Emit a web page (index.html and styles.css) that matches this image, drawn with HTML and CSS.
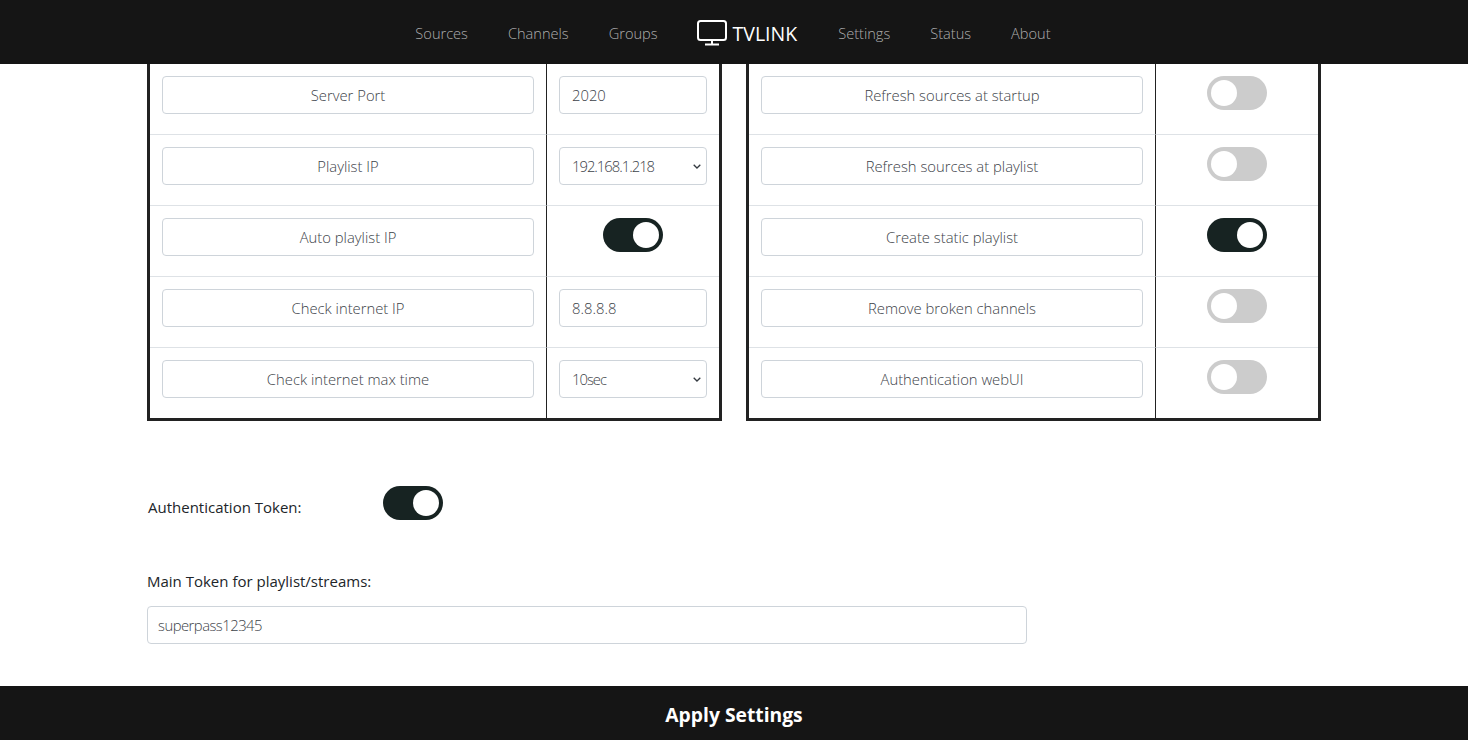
FILE: index.html
```html
<!DOCTYPE html>
<html lang="en">
<head>
    <meta charset="UTF-8">
    <title>TVLINK Settings</title>
    <link rel="stylesheet" href="styles.css">
</head>
<body>
    <nav class="topbar">
        <a class="nav-link" href="#">Sources</a>
        <a class="nav-link" href="#">Channels</a>
        <a class="nav-link" href="#">Groups</a>
        <a class="brand" href="#">
            <svg class="brand-icon" viewBox="0 0 30 26" width="30" height="26" fill="none" stroke="#fff" stroke-width="2">
                <rect x="1" y="1" width="28" height="19" rx="2.5"/>
                <path d="M15 20v4M8 24.500h14"/>
            </svg>
            TVLINK
        </a>
        <a class="nav-link" href="#">Settings</a>
        <a class="nav-link" href="#">Status</a>
        <a class="nav-link" href="#">About</a>
    </nav>

    <main class="content">
        <div class="tables">
            <table class="settings-table table-left">
                <tr>
                    <td class="name"><div class="field label-field">Server Port</div></td>
                    <td class="value"><input class="field" type="text" value="2020"></td>
                </tr>
                <tr>
                    <td class="name"><div class="field label-field">Playlist IP</div></td>
                    <td class="value"><select class="field select-field"><option>192.168.1.218</option></select></td>
                </tr>
                <tr>
                    <td class="name"><div class="field label-field">Auto playlist IP</div></td>
                    <td class="value"><span class="switch on"></span></td>
                </tr>
                <tr>
                    <td class="name"><div class="field label-field">Check internet IP</div></td>
                    <td class="value"><input class="field" type="text" value="8.8.8.8"></td>
                </tr>
                <tr>
                    <td class="name"><div class="field label-field">Check internet max time</div></td>
                    <td class="value"><select class="field select-field"><option>10sec</option></select></td>
                </tr>
            </table>

            <table class="settings-table table-right">
                <tr>
                    <td class="name"><div class="field label-field">Refresh sources at startup</div></td>
                    <td class="value"><span class="switch"></span></td>
                </tr>
                <tr>
                    <td class="name"><div class="field label-field">Refresh sources at playlist</div></td>
                    <td class="value"><span class="switch"></span></td>
                </tr>
                <tr>
                    <td class="name"><div class="field label-field">Create static playlist</div></td>
                    <td class="value"><span class="switch on"></span></td>
                </tr>
                <tr>
                    <td class="name"><div class="field label-field">Remove broken channels</div></td>
                    <td class="value"><span class="switch"></span></td>
                </tr>
                <tr>
                    <td class="name"><div class="field label-field">Authentication webUI</div></td>
                    <td class="value"><span class="switch"></span></td>
                </tr>
            </table>
        </div>

        <div class="token-switch">
            <span class="token-label">Authentication Token:</span>
            <span class="switch on"></span>
        </div>

        <label class="main-token-label" for="token">Main Token for playlist/streams:</label>
        <input class="field token-input" id="token" type="text" value="superpass12345">
    </main>

    <footer class="apply-bar">Apply Settings</footer>
</body>
</html>
```

FILE: styles.css
```css
* {
    box-sizing: border-box;
}

html, body {
    height: 100%;
}

body {
    margin: 0;
    display: flex;
    flex-direction: column;
    overflow: hidden;
    font-family: "Open Sans", sans-serif;
    font-size: 15px;
    color: #212529;
    background-color: white;
}

.topbar {
    height: 64px;
    flex: none;
    display: flex;
    justify-content: center;
    align-items: center;
    gap: 40px;
    padding: 2px 2px 0 0;
    background-color: #151515;
}

.nav-link {
    font-size: 14.6px;
    font-weight: 300;
    color: rgba(255, 255, 255, 0.65);
    text-decoration: none;
}

.brand {
    display: flex;
    align-items: center;
    gap: 6px;
    margin: 0 1px 0 -1px;
    font-size: 19.5px;
    font-weight: 400;
    color: white;
    text-decoration: none;
}

.content {
    flex: 1;
    padding: 0 147px;
}

.tables {
    display: flex;
    gap: 24px;
}

.settings-table {
    border-collapse: separate;
    border-spacing: 0;
    border: 3px solid #222;
    border-top: none;
    table-layout: fixed;
}

.table-left {
    width: 575px;
}

.table-left .name {
    width: 397px;
}

.table-right {
    width: 575px;
}

.table-right .name {
    width: 407px;
}

.settings-table td {
    padding: 12px 12px 20px;
    vertical-align: top;
    border-bottom: 1px solid #dee2e6;
}

.settings-table tr:last-child td {
    border-bottom: none;
}

.settings-table .name {
    border-right: 1px solid #222;
}

.value {
    text-align: center;
}

.field {
    display: block;
    width: 100%;
    height: 38px;
    padding: 0 12px;
    font-family: "Open Sans", sans-serif;
    font-size: 14.8px;
    font-weight: 300;
    line-height: 36px;
    color: #3c4248;
    background-color: white;
    border: 1px solid #ced4da;
    border-radius: 4px;
}

.label-field {
    text-align: center;
}

/* chevron drawn like the native one, smaller than the default */
.select-field {
    appearance: none;
    letter-spacing: -1px;
    background-image: url("data:image/svg+xml,%3Csvg xmlns='http://www.w3.org/2000/svg' width='8' height='5' viewBox='0 0 8 5'%3E%3Cpath d='M.7.7 4 4l3.300-3.300' fill='none' stroke='%23343a40' stroke-width='1.300'/%3E%3C/svg%3E");
    background-repeat: no-repeat;
    background-position: right 5px center;
}

.switch {
    display: inline-block;
    position: relative;
    vertical-align: top;
    width: 60px;
    height: 34px;
    border-radius: 34px;
    background-color: #ccc;
}

.switch::before {
    content: "";
    position: absolute;
    left: 4px;
    top: 4px;
    width: 26px;
    height: 26px;
    border-radius: 50%;
    background-color: white;
}

.switch.on {
    background-color: #172322;
}

.switch.on::before {
    left: 30px;
}

.token-switch {
    display: flex;
    align-items: flex-start;
    margin-top: 65px;
}

.token-label {
    width: 236px;
    padding: 11px 0 0 1px;
    font-weight: 400;
}

.main-token-label {
    display: block;
    margin-top: 51px;
    font-weight: 400;
}

.token-input {
    width: 880px;
    margin-top: 15px;
    padding: 0 10px;
    letter-spacing: -0.5px;
}

.apply-bar {
    height: 54px;
    flex: none;
    display: flex;
    justify-content: center;
    align-items: center;
    padding-top: 2px;
    font-size: 19.3px;
    font-weight: 700;
    color: white;
    background-color: #151515;
}
```
